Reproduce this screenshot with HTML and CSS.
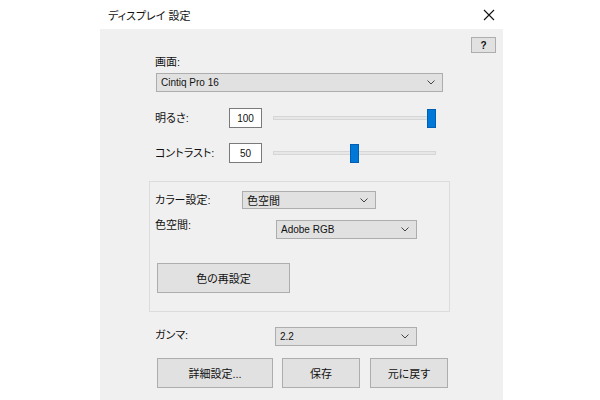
FILE: index.html
```html
<!DOCTYPE html>
<html lang="ja">
<head>
<meta charset="utf-8">
<link rel="stylesheet" href="styles.css">
</head>
<body>
<div class="window">
  <div class="titlebar">
    <span class="title">ディスプレイ 設定</span>
    <svg class="close" width="12" height="12" viewBox="0 0 12 12"><path d="M1 1 L11 11 M11 1 L1 11" stroke="#111" stroke-width="1.1" fill="none"/></svg>
  </div>
  <div class="content">
    <div class="help-row"><div class="btn help">?</div></div>
    <div class="label screen-label">画面:</div>
    <div class="combo screen-combo"><span class="latin">Cintiq Pro 16</span><svg class="chev" width="8" height="5" viewBox="0 0 8 5"><path d="M0.5 0.5 L4 4 L7.5 0.5" stroke="#444" fill="none"/></svg></div>

    <div class="slider-row bright-row">
      <span class="label row-label">明るさ:</span>
      <div class="input latin">100</div>
      <div class="slider"><div class="track"></div><div class="thumb" style="left:154px"></div></div>
    </div>
    <div class="slider-row contrast-row">
      <span class="label row-label">コントラスト:</span>
      <div class="input latin">50</div>
      <div class="slider"><div class="track"></div><div class="thumb" style="left:77px"></div></div>
    </div>

    <div class="group">
      <div class="g-row color-row">
        <span class="label g-label">カラー設定:</span>
        <div class="combo color-combo"><span>色空間</span><svg class="chev" width="8" height="5" viewBox="0 0 8 5"><path d="M0.5 0.5 L4 4 L7.5 0.5" stroke="#444" fill="none"/></svg></div>
      </div>
      <div class="g-row space-row">
        <span class="label space-label">色空間:</span>
        <div class="combo space-combo"><span class="latin">Adobe RGB</span><svg class="chev" width="8" height="5" viewBox="0 0 8 5"><path d="M0.5 0.5 L4 4 L7.5 0.5" stroke="#444" fill="none"/></svg></div>
      </div>
      <div class="btn reset">色の再設定</div>
    </div>

    <div class="gamma-row">
      <span class="label gamma-label">ガンマ:</span>
      <div class="combo gamma-combo"><span class="latin">2.2</span><svg class="chev" width="8" height="5" viewBox="0 0 8 5"><path d="M0.5 0.5 L4 4 L7.5 0.5" stroke="#444" fill="none"/></svg></div>
    </div>

    <div class="btn-row">
      <div class="btn adv">詳細設定...</div>
      <div class="btn save">保存</div>
      <div class="btn revert">元に戻す</div>
    </div>
  </div>
</div>
</body>
</html>
```
FILE: styles.css
```css
html, body {
  margin: 0;
  padding: 0;
  background: #ffffff;
}
body {
  font-family: "Liberation Sans", "Noto Sans CJK JP", sans-serif;
  font-size: 11px;
  font-feature-settings: "palt";
  color: #111;
}
.latin {
  font-family: "Liberation Sans", sans-serif;
  font-size: 10px;
}
.window {
  margin-left: 100px;
  width: 403px;
  height: 400px;
  overflow: hidden;
}
.titlebar {
  height: 29px;
  background: #fff;
  display: flex;
  align-items: center;
  justify-content: space-between;
  padding: 0 7px 0 8px;
}
.title {
  font-size: 11px;
  line-height: 14px;
  margin-top: 3px;
}
.close {
  margin-right: 1px;
  margin-top: 1px;
}
.content {
  background: #f0f0f0;
  height: 371px;
  padding-left: 55px;
  box-sizing: border-box;
}
.label {
  line-height: 14px;
  white-space: nowrap;
}
.help-row {
  display: flex;
  justify-content: flex-end;
  padding: 8px 7px 0 0;
  height: 24px;
  box-sizing: border-box;
}
.btn {
  background: #e1e1e1;
  border: 1px solid #adadad;
  box-sizing: border-box;
  display: flex;
  align-items: center;
  justify-content: center;
  font-size: 11px;
}
.help {
  width: 25px;
  height: 16px;
  font-size: 10px;
  font-weight: bold;
}
.screen-label {
  margin-top: 2px;
}
.combo {
  background: #e1e1e1;
  border: 1px solid #adadad;
  box-sizing: border-box;
  display: flex;
  align-items: center;
  justify-content: space-between;
  padding: 0 7px 0 4px;
  font-size: 11px;
}
.screen-combo {
  margin-top: 4px;
  margin-left: 1px;
  width: 287px;
  height: 19px;
}
.slider-row {
  display: flex;
  align-items: center;
  height: 20px;
}
.bright-row { margin-top: 16px; }
.contrast-row { margin-top: 15px; }
.row-label {
  width: 74px;
}
.input {
  width: 33px;
  height: 20px;
  box-sizing: border-box;
  background: #fff;
  border: 1px solid #7a7a7a;
  display: flex;
  align-items: center;
  justify-content: center;
}
.slider {
  position: relative;
  width: 163px;
  height: 20px;
  margin-left: 11px;
  display: flex;
  align-items: center;
}
.track {
  width: 100%;
  height: 4px;
  background: #e7e7e7;
  border: 1px solid #d6d6d6;
  box-sizing: border-box;
}
.thumb {
  position: absolute;
  top: 1px;
  width: 9px;
  height: 19px;
  background: #0078d7;
  border: 1px solid #005fb0;
  box-sizing: border-box;
}
.group {
  margin-top: 18px;
  margin-left: -6px;
  width: 301px;
  height: 131px;
  border: 1px solid #dcdcdc;
  box-sizing: border-box;
  padding: 9px 0 0 5px;
}
.g-row {
  display: flex;
  align-items: center;
}
.g-label {
  width: 87px;
}
.color-combo {
  width: 134px;
  height: 18px;
}
.space-row {
  margin-top: 9px;
  align-items: flex-start;
}
.space-label {
  width: 121px;
  margin-top: 0px;
}
.space-combo {
  width: 141px;
  height: 19px;
  margin-top: 2px;
}
.reset {
  margin-top: 24px;
  margin-left: 2px;
  width: 133px;
  height: 30px;
}
.gamma-row {
  display: flex;
  align-items: flex-start;
  margin-top: 15px;
}
.gamma-label {
  width: 120px;
  margin-top: 1px;
}
.gamma-combo {
  width: 142px;
  height: 19px;
}
.btn-row {
  display: flex;
  margin-top: 12px;
  margin-left: 2px;
}
.btn-row .btn {
  height: 30px;
}
.adv { width: 116px; }
.save { width: 78px; margin-left: 9px; }
.revert { width: 78px; margin-left: 10px; }
```
